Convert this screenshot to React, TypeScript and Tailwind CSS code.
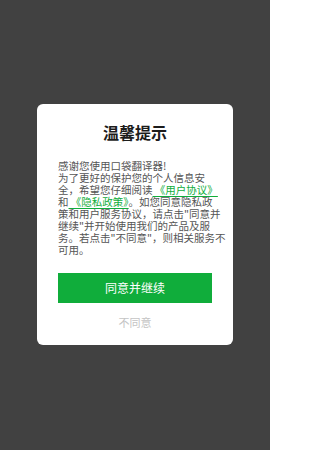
const FONT = "font-['Noto_Sans_CJK_SC','Noto_Sans',sans-serif]"

function Link({ children }: { children: string }) {
  return (
    <span className="text-[#10ad3b] underline decoration-[#10ad3b] underline-offset-2">
      {children}
    </span>
  )
}

export default function App() {
  return (
    <div
      className={`${FONT} flex h-[450px] w-[270px] items-start justify-center bg-[#414141] pt-[104px]`}
    >
      <div className="flex w-[196px] flex-col rounded-[6px] bg-white px-[21px] pt-[16px] pb-[16px]">
        <h1 className="text-center text-[16px] leading-[24px] font-bold text-[#1c1c1c]">
          温馨提示
        </h1>
        <div className="mt-[16px] text-[10.5px] leading-[12px] whitespace-nowrap text-[#555]">
          <div>感谢您使用口袋翻译器!</div>
          <div>为了更好的保护您的个人信息安</div>
          <div>
            全，希望您仔细阅读<Link>{" 《用户协议》"}</Link>
          </div>
          <div>
            和<Link>{" 《隐私政策》"}</Link>。如您同意隐私政
          </div>
          <div>策和用户服务协议，请点击"同意并</div>
          <div>继续"并开始使用我们的产品及服</div>
          <div>务。若点击"不同意"，则相关服务不</div>
          <div>可用。</div>
        </div>
        <button className="mt-[17px] h-[30px] w-full bg-[#10ad3b] text-[12px] text-white">
          同意并继续
        </button>
        <button className="mt-[12px] text-center text-[11px] leading-[14px] text-[#c4c4c4]">
          不同意
        </button>
      </div>
    </div>
  )
}
